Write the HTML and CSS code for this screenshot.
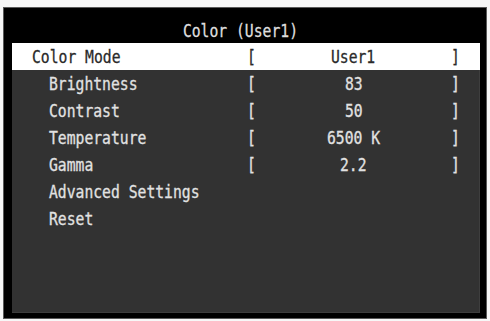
FILE: index.html
```html
<!DOCTYPE html>
<html>
<head>
<meta charset="utf-8">
<link rel="stylesheet" href="styles.css">
</head>
<body>
<div class="frame">
  <div class="screen">
    <div class="title"><span class="t tc">Color (User1)</span></div>
    <div class="menu">
      <div class="row sel">
        <div class="label top"><span class="t">Color Mode</span></div>
        <div class="br"><span class="t">[</span></div>
        <div class="val"><span class="t tc">User1</span></div>
        <div class="br"><span class="t">]</span></div>
      </div>
      <div class="row">
        <div class="label"><span class="t">Brightness</span></div>
        <div class="br"><span class="t">[</span></div>
        <div class="val"><span class="t tc">83</span></div>
        <div class="br"><span class="t">]</span></div>
      </div>
      <div class="row">
        <div class="label"><span class="t">Contrast</span></div>
        <div class="br"><span class="t">[</span></div>
        <div class="val"><span class="t tc">50</span></div>
        <div class="br"><span class="t">]</span></div>
      </div>
      <div class="row">
        <div class="label"><span class="t">Temperature</span></div>
        <div class="br"><span class="t">[</span></div>
        <div class="val"><span class="t tc">6500 K</span></div>
        <div class="br"><span class="t">]</span></div>
      </div>
      <div class="row">
        <div class="label"><span class="t">Gamma</span></div>
        <div class="br"><span class="t">[</span></div>
        <div class="val"><span class="t tc">2.2</span></div>
        <div class="br"><span class="t">]</span></div>
      </div>
      <div class="row">
        <div class="label"><span class="t">Advanced Settings</span></div>
      </div>
      <div class="row">
        <div class="label"><span class="t">Reset</span></div>
      </div>
    </div>
  </div>
</div>
</body>
</html>
```
FILE: styles.css
```css
* { box-sizing: border-box; }
html, body { margin: 0; padding: 0; }
body {
  background: #f7f7f7;
  width: 490px;
  height: 321px;
  overflow: hidden;
  font-family: "DejaVu Sans Mono", monospace;
  font-size: 18px;
}
.frame {
  margin: 7px 0 0 3px;
  width: 484px;
  height: 312px;
  border: 1px solid #5a5a5a;
  background: #000;
  padding: 0 6px 5px 8px;
}
.screen {
  height: 100%;
  display: flex;
  flex-direction: column;
  background: #323232;
  box-shadow: inset -1px -1px 0 #3e3e3e;
}
.title {
  height: 35px;
  background: #000;
  color: #dedede;
  display: flex;
  justify-content: center;
  align-items: center;
  padding: 9px 11px 0 0;
}
.menu {
  display: flex;
  flex-direction: column;
}
.row {
  height: 27px;
  display: grid;
  grid-template-columns: 235px 9px 1fr 9px 20px;
  align-items: center;
  color: #e2e2e2;
}
.row.sel {
  background: #fff;
  color: #2a2a2a;
}
.label { padding-left: 37px; white-space: nowrap; }
.label.top { padding-left: 20px; }
.br { text-align: left; }
.val { text-align: center; white-space: nowrap; }
.t {
  display: inline-block;
  transform: scaleX(0.817);
  transform-origin: left center;
  white-space: nowrap;
  -webkit-text-stroke: 0.3px currentColor;
}
.tc { transform-origin: center center; }
```
